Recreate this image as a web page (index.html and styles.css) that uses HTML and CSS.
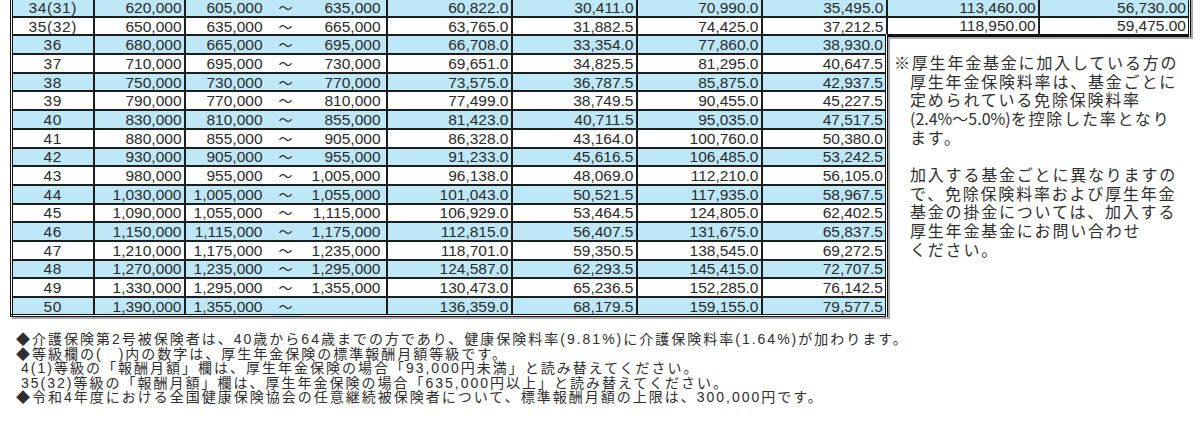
FILE: index.html
```html
<!DOCTYPE html>
<html lang="ja">
<head>
<meta charset="utf-8">
<title>保険料額表</title>
<link rel="stylesheet" href="styles.css">
</head>
<body>
<div class="sheet">
  <table class="grid main">
    <colgroup>
      <col class="c-grade"><col class="c-month"><col class="c-lo"><col class="c-tl"><col class="c-hi">
      <col class="c-v"><col class="c-v"><col class="c-v"><col class="c-v">
    </colgroup>
    <tbody>
      <tr class="b"><td class="g">34(31)</td><td>620,000</td><td class="lo">605,000</td><td class="tl">～</td><td class="hi">635,000</td><td>60,822.0</td><td>30,411.0</td><td>70,990.0</td><td class="e1">35,495.0</td></tr>
      <tr><td class="g">35(32)</td><td>650,000</td><td class="lo">635,000</td><td class="tl">～</td><td class="hi">665,000</td><td>63,765.0</td><td>31,882.5</td><td>74,425.0</td><td class="e1">37,212.5</td></tr>
      <tr class="b"><td class="g">36</td><td>680,000</td><td class="lo">665,000</td><td class="tl">～</td><td class="hi">695,000</td><td>66,708.0</td><td>33,354.0</td><td>77,860.0</td><td class="e2">38,930.0</td></tr>
      <tr><td class="g">37</td><td>710,000</td><td class="lo">695,000</td><td class="tl">～</td><td class="hi">730,000</td><td>69,651.0</td><td>34,825.5</td><td>81,295.0</td><td class="e2">40,647.5</td></tr>
      <tr class="b"><td class="g">38</td><td>750,000</td><td class="lo">730,000</td><td class="tl">～</td><td class="hi">770,000</td><td>73,575.0</td><td>36,787.5</td><td>85,875.0</td><td class="e2">42,937.5</td></tr>
      <tr><td class="g">39</td><td>790,000</td><td class="lo">770,000</td><td class="tl">～</td><td class="hi">810,000</td><td>77,499.0</td><td>38,749.5</td><td>90,455.0</td><td class="e2">45,227.5</td></tr>
      <tr class="b"><td class="g">40</td><td>830,000</td><td class="lo">810,000</td><td class="tl">～</td><td class="hi">855,000</td><td>81,423.0</td><td>40,711.5</td><td>95,035.0</td><td class="e2">47,517.5</td></tr>
      <tr><td class="g">41</td><td>880,000</td><td class="lo">855,000</td><td class="tl">～</td><td class="hi">905,000</td><td>86,328.0</td><td>43,164.0</td><td>100,760.0</td><td class="e2">50,380.0</td></tr>
      <tr class="b"><td class="g">42</td><td>930,000</td><td class="lo">905,000</td><td class="tl">～</td><td class="hi">955,000</td><td>91,233.0</td><td>45,616.5</td><td>106,485.0</td><td class="e2">53,242.5</td></tr>
      <tr><td class="g">43</td><td>980,000</td><td class="lo">955,000</td><td class="tl">～</td><td class="hi">1,005,000</td><td>96,138.0</td><td>48,069.0</td><td>112,210.0</td><td class="e2">56,105.0</td></tr>
      <tr class="b"><td class="g">44</td><td>1,030,000</td><td class="lo">1,005,000</td><td class="tl">～</td><td class="hi">1,055,000</td><td>101,043.0</td><td>50,521.5</td><td>117,935.0</td><td class="e2">58,967.5</td></tr>
      <tr><td class="g">45</td><td>1,090,000</td><td class="lo">1,055,000</td><td class="tl">～</td><td class="hi">1,115,000</td><td>106,929.0</td><td>53,464.5</td><td>124,805.0</td><td class="e2">62,402.5</td></tr>
      <tr class="b"><td class="g">46</td><td>1,150,000</td><td class="lo">1,115,000</td><td class="tl">～</td><td class="hi">1,175,000</td><td>112,815.0</td><td>56,407.5</td><td>131,675.0</td><td class="e2">65,837.5</td></tr>
      <tr><td class="g">47</td><td>1,210,000</td><td class="lo">1,175,000</td><td class="tl">～</td><td class="hi">1,235,000</td><td>118,701.0</td><td>59,350.5</td><td>138,545.0</td><td class="e2">69,272.5</td></tr>
      <tr class="b"><td class="g">48</td><td>1,270,000</td><td class="lo">1,235,000</td><td class="tl">～</td><td class="hi">1,295,000</td><td>124,587.0</td><td>62,293.5</td><td>145,415.0</td><td class="e2">72,707.5</td></tr>
      <tr><td class="g">49</td><td>1,330,000</td><td class="lo">1,295,000</td><td class="tl">～</td><td class="hi">1,355,000</td><td>130,473.0</td><td>65,236.5</td><td>152,285.0</td><td class="e2">76,142.5</td></tr>
      <tr class="b"><td class="g">50</td><td>1,390,000</td><td class="lo">1,355,000</td><td class="tl">～</td><td class="hi"></td><td>136,359.0</td><td>68,179.5</td><td>159,155.0</td><td class="e2">79,577.5</td></tr>
    </tbody>
  </table>
  <div class="side">
    <table class="grid sub">
      <colgroup><col class="c-w"><col class="c-w"></colgroup>
      <tbody>
        <tr class="b"><td>113,460.00</td><td>56,730.00</td></tr>
        <tr><td>118,950.00</td><td>59,475.00</td></tr>
      </tbody>
    </table>
    <div class="note">
      <p class="nl">※厚生年金基金に加入している方の</p>
      <p class="nl ind">厚生年金保険料率は、基金ごとに</p>
      <p class="nl ind">定められている免除保険料率</p>
      <p class="nl ind"><span class="num">(2.4%～5.0%)</span>を控除した率となり</p>
      <p class="nl ind">ます。</p>
      <p class="nl ind">&nbsp;</p>
      <p class="nl ind">加入する基金ごとに異なりますの</p>
      <p class="nl ind">で、免除保険料率および厚生年金</p>
      <p class="nl ind">基金の掛金については、加入する</p>
      <p class="nl ind">厚生年金基金にお問い合わせ</p>
      <p class="nl ind">ください。</p>
    </div>
  </div>
</div>
<div class="foot">
  <p class="fl">◆介護保険第2号被保険者は、40歳から64歳までの方であり、健康保険料率(9.81%)に介護保険料率(1.64%)が加わります。</p>
  <p class="fl">◆等級欄の(　)内の数字は、厚生年金保険の標準報酬月額等級です。</p>
  <p class="fl sub-l">4(1)等級の「報酬月額」欄は、厚生年金保険の場合「93,000円未満」と読み替えてください。</p>
  <p class="fl sub-l">35(32)等級の「報酬月額」欄は、厚生年金保険の場合「635,000円以上」と読み替えてください。</p>
  <p class="fl">◆令和4年度における全国健康保険協会の任意継続被保険者について、標準報酬月額の上限は、300,000円です。</p>
</div>
</body>
</html>
```

FILE: styles.css
```css
html, body {
  margin: 0;
  padding: 0;
  background: #ffffff;
}

body {
  font-family: "Liberation Sans", "Noto Sans CJK JP", sans-serif;
  color: #2b2b2b;
  width: 1200px;
  height: 447px;
  overflow: hidden;
}

.sheet {
  display: flex;
  align-items: flex-start;
  padding-left: 10px;
  margin-top: -3px;
}

.grid {
  border-collapse: collapse;
  table-layout: fixed;
  font-size: 15.5px;
}

.grid tr {
  height: 18.7px;
}

.grid td {
  padding: 0 2px 0 0;
  border: 2px solid #1e1e1e;
  line-height: 15px;
  text-align: right;
  white-space: nowrap;
  overflow: hidden;
  background: #ffffff;
}

.grid tr.b td {
  background: #bee7f8;
}

.main {
  width: 876px;
  border-left: 3px double #111;
  border-bottom: 3px double #111;
  box-shadow: 2px 2px 0 #a9a9a9;
}

.c-grade { width: 82px; }
.c-month { width: 91px; }
.c-lo { width: 87px; }
.c-tl { width: 28px; }
.c-hi { width: 87px; }
.c-v { width: 125px; }

.grid td.g {
  text-align: center;
  padding: 0;
  letter-spacing: 0.6px;
}

.grid td.lo {
  border-right: none;
  padding-right: 9px;
}

.grid td.tl {
  border-left: none;
  border-right: none;
  text-align: center;
  padding: 0;
  overflow: visible;
  font-family: "Noto Sans CJK JP", sans-serif;
  font-size: 14px;
}

.grid td.hi {
  border-left: none;
  padding-right: 5px;
}

.grid td.e1 {
  border-right: 2px solid #1e1e1e;
}

.grid td.e2 {
  border-right: 3px double #111;
}

.side {
  width: 305px;
  flex: none;
}

.sub {
  width: 303px;
  border-right: 3px double #111;
  border-bottom: 3px solid #111;
  box-shadow: 2px 2px 0 #a9a9a9;
}

.sub td:first-child {
  border-left: none;
}

.c-w { width: 150px; }

.note {
  padding: 16px 0 0 6px;
  font-family: "Noto Sans CJK JP", sans-serif;
  font-size: 16px;
  letter-spacing: 1.8px;
  color: #2e2e2e;
}

.note .num {
  letter-spacing: 0;
}

.nl {
  margin: 0;
  height: 18.7px;
  line-height: 18.7px;
  white-space: nowrap;
}

.nl.ind {
  padding-left: 16px;
}

.foot {
  margin: 15px 0 0 16px;
  font-family: "Liberation Sans", "Noto Sans CJK JP", sans-serif;
  font-size: 14px;
  letter-spacing: 2px;
  color: #2e2e2e;
}

.fl {
  margin: 0;
  line-height: 14.5px;
  white-space: nowrap;
}

.fl.sub-l {
  padding-left: 5px;
}
```
